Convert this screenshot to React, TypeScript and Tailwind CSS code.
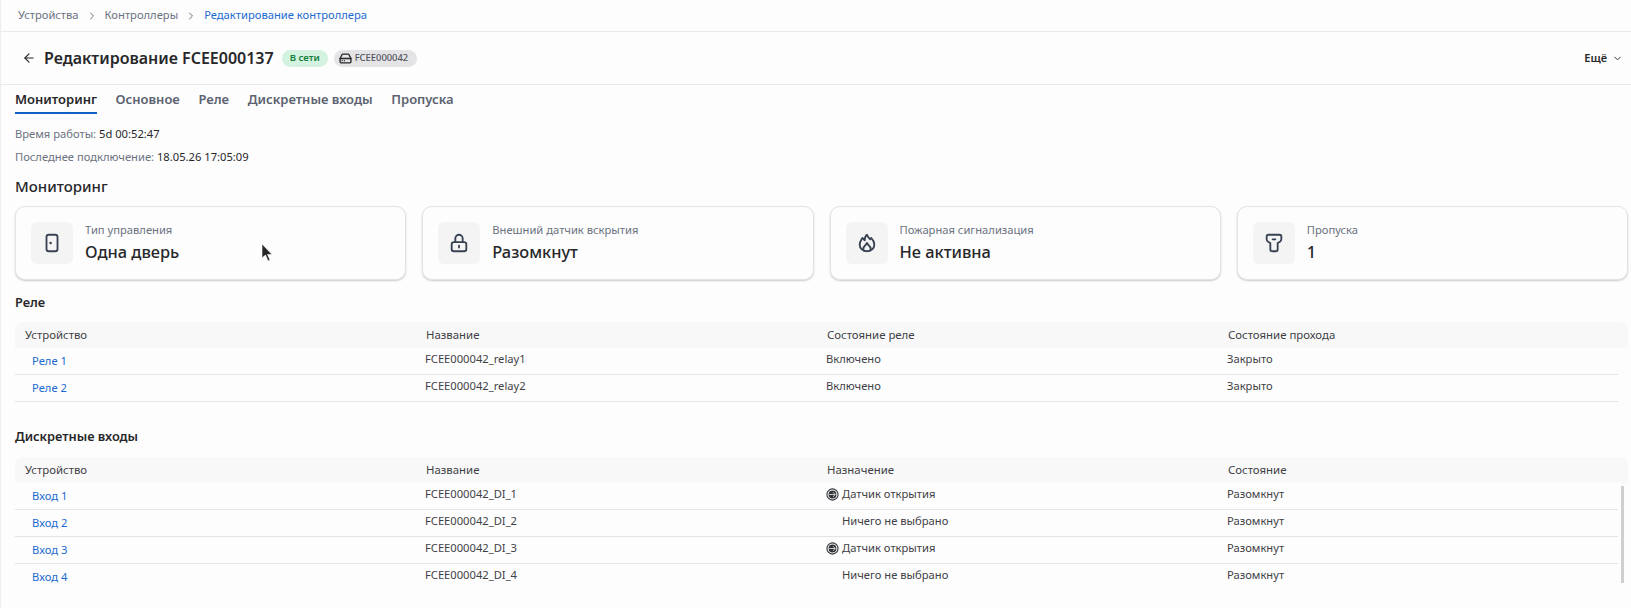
import { ArrowLeft, ChevronDown, ChevronRight, HardDrive } from "lucide-react";
import type { ReactNode } from "react";

const font = { fontFamily: '"Noto Sans", sans-serif' };

function DoorIcon() {
  return (
    <svg width="22" height="22" viewBox="0 0 24 24" fill="none" stroke="currentColor" strokeWidth="2">
      <rect x="6" y="3" width="12" height="18" rx="2.5" />
      <circle cx="10.5" cy="12" r="1.4" fill="currentColor" stroke="none" />
    </svg>
  );
}

function LockIcon() {
  return (
    <svg width="22" height="22" viewBox="0 0 24 24" fill="none" stroke="currentColor" strokeWidth="2" strokeLinecap="round">
      <rect x="4" y="11" width="16" height="10" rx="2.5" />
      <path d="M8 11V7a4 4 0 0 1 8 0v4" />
      <path d="M12 15v2" />
    </svg>
  );
}

function FireIcon() {
  return (
    <svg width="22" height="22" viewBox="0 0 24 24" fill="none" stroke="currentColor" strokeWidth="2" strokeLinejoin="round" strokeLinecap="round">
      <path d="M12 21c-4.4 0-8-3-8-7.5 0-3 2-5 3-7l2.500 2.500C9.500 6.500 10.500 4 12 3c.5 2.500 2 3.500 3.500 5l1-1.500c2 2 3.500 4.500 3.500 7C20 18 16.400 21 12 21Z" />
      <path d="M9 20.500c-1-1-1.500-2.500-.5-4 1-1.500 2.500-2.500 3.500-4.500 1 2 2.500 3 3.500 4.500 1 1.500.5 3-.5 4" />
    </svg>
  );
}

function PassIcon() {
  return (
    <svg width="22" height="22" viewBox="0 0 24 24" fill="none" stroke="currentColor" strokeWidth="2" strokeLinejoin="round" strokeLinecap="round">
      <path d="M6 3h12a2 2 0 0 1 2 2v3a3 3 0 0 1-1.500 2.600L16 12v7a2 2 0 0 1-2 2h-4a2 2 0 0 1-2-2v-7l-2.500-1.400A3 3 0 0 1 4 8V5a2 2 0 0 1 2-2Z" />
      <path d="M10.500 8h3" />
    </svg>
  );
}

function SensorIcon() {
  return (
    <svg width="13" height="13" viewBox="0 0 14 14" className="mr-[3px] shrink-0">
      <circle cx="7" cy="7" r="6" fill="none" stroke="#2f3338" strokeWidth="1.2" />
      <circle cx="7" cy="7" r="4.2" fill="#2f3338" />
      <path d="M3.500 7h6.500M7.500 4.500 10 7l-2.500 2.500" fill="none" stroke="#e8e8e8" strokeWidth="0.9" />
    </svg>
  );
}

function StatCard({ icon, label, value }: { icon: ReactNode; label: string; value: string }) {
  return (
    <div className="flex-1 h-[74px] flex items-center gap-3 pl-[15px] rounded-[10px] border border-[#e4e4e7] bg-[#fdfdfd] shadow-[0_1px_2px_#00000033]">
      <div className="w-[42px] h-[42px] rounded-md bg-[#f4f4f5] flex items-center justify-center text-[#374151] shrink-0">
        {icon}
      </div>
      <div>
        <p className="text-[11.2px] leading-4 text-[#6b7280]">{label}</p>
        <p className="text-[16.4px] leading-6 mt-[2px] font-medium text-[#27272a]">{value}</p>
      </div>
    </div>
  );
}

function DataTable({ head, rows, scroll }: { head: string[]; rows: ReactNode[][]; scroll?: boolean }) {
  return (
    <div className="relative">
      <div className="grid grid-cols-[401px_401px_401px_1fr] h-[26px] items-center bg-[#f8f8f8] rounded-t-lg text-[11.4px] text-[#3f3f46]">
        {head.map((h) => (
          <div key={h} className="pl-[10px]">{h}</div>
        ))}
      </div>
      <div className="mr-[10px]">
        {rows.map((row, i) => (
          <div
            key={i}
            className={`grid grid-cols-[401px_401px_401px_1fr] h-[27px] text-[11.2px] text-[#3f3f46] ${
              i === rows.length - 1 && scroll ? "" : "border-b border-[#e4e4e4]"
            }`}
          >
            <div className="pl-[17px] pt-[5px] text-[#1a6ad0]">{row[0]}</div>
            <div className="pl-[9px] pt-[3px]">{row[1]}</div>
            <div className="pl-[9px] pt-[3px]">{row[2]}</div>
            <div className="pl-[9px] pt-[3px]">{row[3]}</div>
          </div>
        ))}
      </div>
      {scroll && <div className="absolute right-[4px] top-[29px] w-[3px] h-[97px] bg-[#cfcfcf]" />}
    </div>
  );
}

const inputRow = (n: number, sensor: boolean) => [
  `Вход ${n}`,
  `FCEE000042_DI_${n}`,
  sensor ? (
    <span className="flex items-center"><SensorIcon />Датчик открытия</span>
  ) : (
    <span className="pl-4">Ничего не выбрано</span>
  ),
  "Разомкнут",
];

export default function App() {
  return (
    <div style={font} className="relative w-[1631px] h-[608px] overflow-hidden bg-[#fdfdfd] border-l border-[#eeeeee]">
      {/* Breadcrumbs */}
      <div className="h-[32px] flex items-center pl-[17px] gap-[7px] border-b border-[#e9ebef] text-[11.2px] text-[#6b7280]">
        <span>Устройства</span>
        <ChevronRight size={12} />
        <span>Контроллеры</span>
        <ChevronRight size={12} />
        <span className="text-[#1a6ad0]">Редактирование контроллера</span>
      </div>

      {/* Header */}
      <div className="h-[53px] flex items-center pl-[21px] pr-[8px] border-b border-[#e9ebef]">
        <ArrowLeft size={14} className="text-[#27272a] mr-[8px]" />
        <h1 className="text-base font-semibold text-[#27272a]">Редактирование FCEE000137</h1>
        <span className="ml-[8px] h-[17px] px-2 rounded-full bg-[#d3f2e0] text-[9.6px] font-semibold text-[#15803d] flex items-center">В сети</span>
        <span className="ml-[6px] h-[17px] pl-[5px] pr-[9px] rounded-full bg-[#e4e4e7] text-[9.4px] font-medium text-[#52525b] flex items-center gap-[3px]">
          <HardDrive size={13} strokeWidth={2.5} className="text-[#27272a]" />FCEE000042
        </span>
        <button className="ml-auto flex items-center gap-[5px] text-[11px] font-semibold text-[#27272a]">
          Ещё <ChevronDown size={11} />
        </button>
      </div>

      <div className="pl-[14px] pr-[3px]">
        {/* Tabs */}
        <div className="flex gap-[18.6px] h-[29px] text-[13px] font-semibold text-[#5b6270]">
          <span className="h-[29px] pt-[5px] text-[#27272a] border-b-2 border-[#0f62c4]">Мониторинг</span>
          <span className="pt-[5px]">Основное</span>
          <span className="pt-[5px]">Реле</span>
          <span className="pt-[5px]">Дискретные входы</span>
          <span className="pt-[5px]">Пропуска</span>
        </div>

        <p className="mt-[12px] text-[11.2px] leading-4 text-[#6b7280]">Время работы: <span className="text-[#27272a]">5d 00:52:47</span></p>
        <p className="mt-[7px] text-[11.2px] leading-4 text-[#6b7280]">Последнее подключение: <span className="text-[#27272a]">18.05.26 17:05:09</span></p>
        <h2 className="mt-[11px] text-[15px] leading-5 font-medium text-[#27272a]">Мониторинг</h2>

        {/* Cards */}
        <div className="flex gap-4 mt-[10px]">
          <StatCard icon={<DoorIcon />} label="Тип управления" value="Одна дверь" />
          <StatCard icon={<LockIcon />} label="Внешний датчик вскрытия" value="Разомкнут" />
          <StatCard icon={<FireIcon />} label="Пожарная сигнализация" value="Не активна" />
          <StatCard icon={<PassIcon />} label="Пропуска" value="1" />
        </div>

        <h3 className="mt-[14px] mb-[12px] text-[12.8px] leading-4 font-semibold text-[#27272a]">Реле</h3>
        <DataTable
          head={["Устройство", "Название", "Состояние реле", "Состояние прохода"]}
          rows={[
            ["Реле 1", "FCEE000042_relay1", "Включено", "Закрыто"],
            ["Реле 2", "FCEE000042_relay2", "Включено", "Закрыто"],
          ]}
        />

        <h3 className="mt-[26px] mb-[13px] text-[12.8px] leading-4 font-semibold text-[#27272a]">Дискретные входы</h3>
        <DataTable
          scroll
          head={["Устройство", "Название", "Назначение", "Состояние"]}
          rows={[inputRow(1, true), inputRow(2, false), inputRow(3, true), inputRow(4, false)]}
        />
      </div>

      {/* Mouse pointer caught in the screenshot */}
      <svg width="14" height="20" viewBox="0 0 14 20" className="absolute left-[260px] top-[243px]">
        <path d="M1 1v14l3.500-3 2.500 6 2-1-2.500-5.500H11Z" fill="#27272a" stroke="#ffffff" strokeWidth="0.6" />
      </svg>
    </div>
  );
}
